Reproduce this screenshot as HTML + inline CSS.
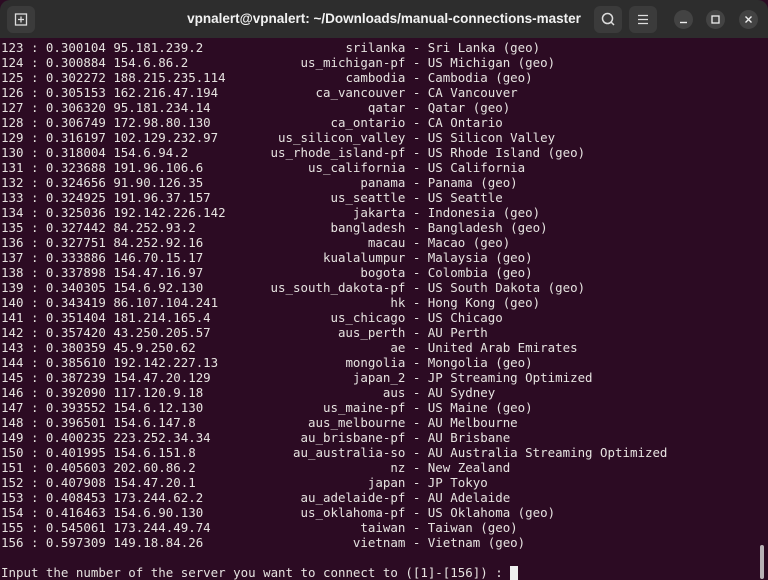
<!DOCTYPE html>
<html><head><meta charset="utf-8"><style>
*{margin:0;padding:0;box-sizing:border-box}
html,body{width:768px;height:579px;overflow:hidden;background:#2c0b23}
.bar{position:absolute;left:0;top:0;width:768px;height:38px;background:#2d2d2d;border-radius:10px 10px 0 0}
.title{position:absolute;left:0;width:768px;top:11px;text-align:center;color:#f2f2f2;font:bold 13.5px "Liberation Sans",sans-serif}
.btn{position:absolute;top:6px;width:28px;height:27px;background:#3b3b3b;border-radius:6px}
.c{position:absolute;top:10px;width:19px;height:19px;border-radius:50%;background:#434343}
.term{position:absolute;left:1px;top:40px;font-family:"DejaVu Sans Mono","Liberation Mono",monospace;font-size:12.45px;line-height:15px;color:#e6e3e0}
.term div{position:relative;height:15px;white-space:pre}
.term b{font-weight:normal;position:absolute;left:0;top:0}
.term i{font-style:normal;display:inline-block;width:54ch;text-align:right}
.cur{display:inline-block;width:8px;height:14px;background:#f0f0f0;vertical-align:-3px}
.sb{position:absolute;left:760px;top:545px;width:4px;height:34px;border-radius:2px;background:#b8b2b6}
</style></head><body>
<div class="bar">
<div class="btn" style="left:7px"><svg width="28" height="27" viewBox="0 0 28 27"><rect x="8.5" y="8" width="11" height="11" fill="none" stroke="#ddd" stroke-width="1.3"/><path d="M14 10.5v6M11 13.5h6" stroke="#ddd" stroke-width="1.3"/></svg></div>
<div class="title">vpnalert@vpnalert: ~/Downloads/manual-connections-master</div>
<div class="btn" style="left:594px"><svg width="28" height="27" viewBox="0 0 28 27"><circle cx="13.5" cy="12.5" r="5" fill="none" stroke="#ddd" stroke-width="1.5"/><path d="M17 16l3 3" stroke="#ddd" stroke-width="1.5"/></svg></div>
<div class="btn" style="left:629px"><svg width="28" height="27" viewBox="0 0 28 27"><path d="M9 9.5h10M9 13.5h10M9 17.5h10" stroke="#ddd" stroke-width="1.3"/></svg></div>
<div class="c" style="left:674px"><svg width="19" height="19"><path d="M6 12.5h7" stroke="#eee" stroke-width="1.4"/></svg></div>
<div class="c" style="left:706px"><svg width="19" height="19"><rect x="6" y="6" width="7" height="7" fill="none" stroke="#eee" stroke-width="1.3"/></svg></div>
<div class="c" style="left:739px"><svg width="19" height="19"><path d="M6.5 6.5l6 6M12.5 6.5l-6 6" stroke="#eee" stroke-width="1.4"/></svg></div>
</div>
<div class="term"><div><b>123 : 0.300104 95.181.239.2</b><i>srilanka</i> - Sri Lanka (geo)</div><div><b>124 : 0.300884 154.6.86.2</b><i>us_michigan-pf</i> - US Michigan (geo)</div><div><b>125 : 0.302272 188.215.235.114</b><i>cambodia</i> - Cambodia (geo)</div><div><b>126 : 0.305153 162.216.47.194</b><i>ca_vancouver</i> - CA Vancouver</div><div><b>127 : 0.306320 95.181.234.14</b><i>qatar</i> - Qatar (geo)</div><div><b>128 : 0.306749 172.98.80.130</b><i>ca_ontario</i> - CA Ontario</div><div><b>129 : 0.316197 102.129.232.97</b><i>us_silicon_valley</i> - US Silicon Valley</div><div><b>130 : 0.318004 154.6.94.2</b><i>us_rhode_island-pf</i> - US Rhode Island (geo)</div><div><b>131 : 0.323688 191.96.106.6</b><i>us_california</i> - US California</div><div><b>132 : 0.324656 91.90.126.35</b><i>panama</i> - Panama (geo)</div><div><b>133 : 0.324925 191.96.37.157</b><i>us_seattle</i> - US Seattle</div><div><b>134 : 0.325036 192.142.226.142</b><i>jakarta</i> - Indonesia (geo)</div><div><b>135 : 0.327442 84.252.93.2</b><i>bangladesh</i> - Bangladesh (geo)</div><div><b>136 : 0.327751 84.252.92.16</b><i>macau</i> - Macao (geo)</div><div><b>137 : 0.333886 146.70.15.17</b><i>kualalumpur</i> - Malaysia (geo)</div><div><b>138 : 0.337898 154.47.16.97</b><i>bogota</i> - Colombia (geo)</div><div><b>139 : 0.340305 154.6.92.130</b><i>us_south_dakota-pf</i> - US South Dakota (geo)</div><div><b>140 : 0.343419 86.107.104.241</b><i>hk</i> - Hong Kong (geo)</div><div><b>141 : 0.351404 181.214.165.4</b><i>us_chicago</i> - US Chicago</div><div><b>142 : 0.357420 43.250.205.57</b><i>aus_perth</i> - AU Perth</div><div><b>143 : 0.380359 45.9.250.62</b><i>ae</i> - United Arab Emirates</div><div><b>144 : 0.385610 192.142.227.13</b><i>mongolia</i> - Mongolia (geo)</div><div><b>145 : 0.387239 154.47.20.129</b><i>japan_2</i> - JP Streaming Optimized</div><div><b>146 : 0.392090 117.120.9.18</b><i>aus</i> - AU Sydney</div><div><b>147 : 0.393552 154.6.12.130</b><i>us_maine-pf</i> - US Maine (geo)</div><div><b>148 : 0.396501 154.6.147.8</b><i>aus_melbourne</i> - AU Melbourne</div><div><b>149 : 0.400235 223.252.34.34</b><i>au_brisbane-pf</i> - AU Brisbane</div><div><b>150 : 0.401995 154.6.151.8</b><i>au_australia-so</i> - AU Australia Streaming Optimized</div><div><b>151 : 0.405603 202.60.86.2</b><i>nz</i> - New Zealand</div><div><b>152 : 0.407908 154.47.20.1</b><i>japan</i> - JP Tokyo</div><div><b>153 : 0.408453 173.244.62.2</b><i>au_adelaide-pf</i> - AU Adelaide</div><div><b>154 : 0.416463 154.6.90.130</b><i>us_oklahoma-pf</i> - US Oklahoma (geo)</div><div><b>155 : 0.545061 173.244.49.74</b><i>taiwan</i> - Taiwan (geo)</div><div><b>156 : 0.597309 149.18.84.26</b><i>vietnam</i> - Vietnam (geo)</div><div></div><div>Input the number of the server you want to connect to ([1]-[156]) : <span class="cur"></span></div></div>
<div class="sb"></div>
</body></html>
